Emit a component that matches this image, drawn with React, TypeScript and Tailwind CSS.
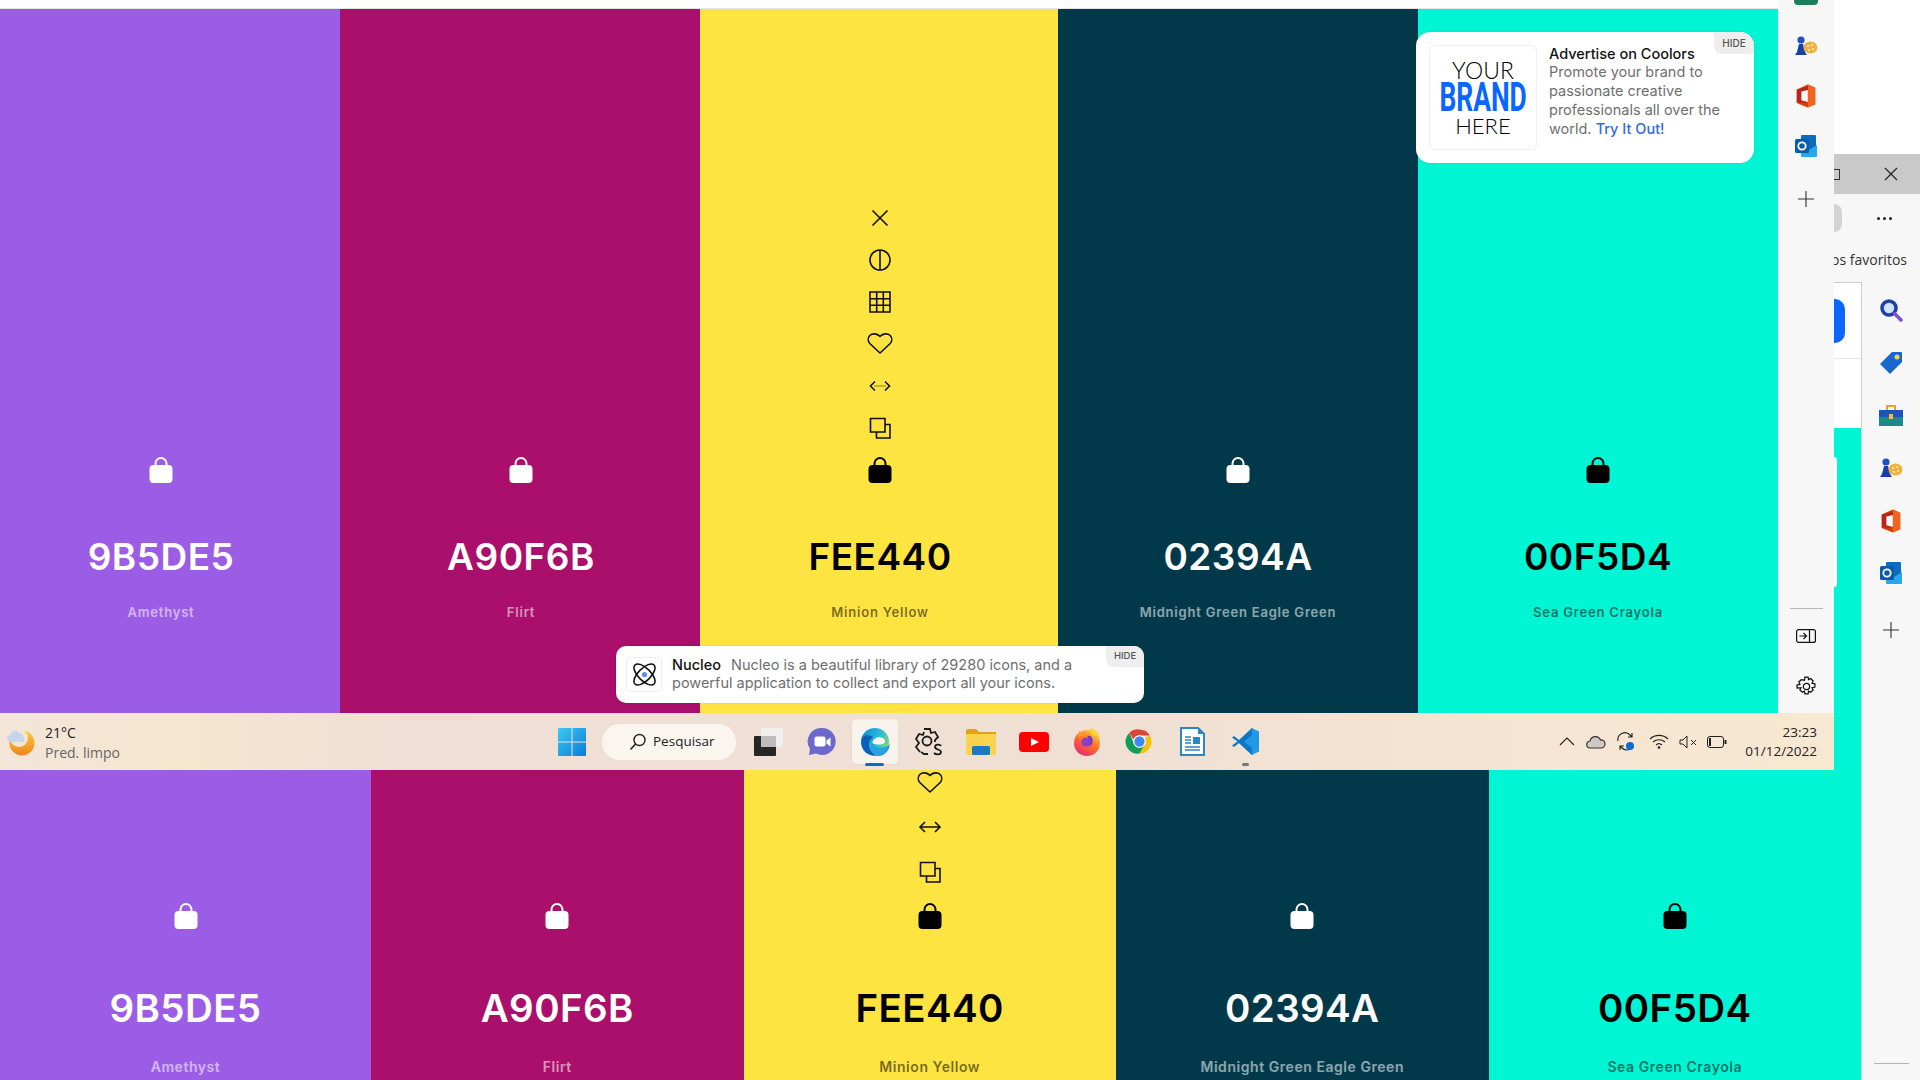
import { ReactNode } from "react";

const FONT = "font-['Inter','Liberation_Sans',sans-serif]";
const WIN = "font-['Open_Sans','Noto_Sans',sans-serif]";

function LockIcon({ color }: { color: string }) {
    return (
        <svg width="24" height="28" viewBox="0 0 24 28">
            <path d="M6.5 12V7.5a5.5 5.5 0 0 1 11 0V12" fill="none" stroke={color} strokeWidth="2" />
            <rect x="0.5" y="9" width="23" height="18" rx="4" fill={color} />
        </svg>
    );
}

function ToolIcon({ kind }: { kind: string }) {
    const p = { fill: "none", stroke: "#111", strokeWidth: 1.6 };
    return (
        <svg width="26" height="26" viewBox="0 0 26 26">
            {kind === "x" && <path d="M5.5 5.5l15 15M20.5 5.5l-15 15" {...p} />}
            {kind === "half" && (
                <>
                    <circle cx="13" cy="13" r="10" {...p} />
                    <path d="M13 3v20" {...p} />
                </>
            )}
            {kind === "grid" && (
                <path d="M3 3h20v20H3zM3 9.7h20M3 16.3h20M9.7 3v20M16.3 3v20" {...p} />
            )}
            {kind === "heart" && (
                <path d="M13 22L2.800 12.500a6 6 0 0 1 0-8c2.800-2.600 7.200-2 10.200 .8 3-2.800 7.400-3.400 10.200-.8a6 6 0 0 1 0 8z" {...p} />
            )}
            {kind === "arrows" && <path d="M8 8l-5 5 5 5M18 8l5 5-5 5M4 13h18" {...p} />}
            {kind === "arrowsfaint" && (
                <>
                    <path d="M7 13h12" stroke="#b5a23a" strokeWidth="1.600" />
                    <path d="M8 8.500L3.500 13 8 17.500M18 8.500l4.500 4.500-4.500 4.500" {...p} />
                </>
            )}
            {kind === "copy" && <path d="M3.500 3.500h14.500v13.500H3.500zM18 9.500h5v13.500H9.500V17" {...p} />}
        </svg>
    );
}

const SWATCHES = [
    { hex: "9B5DE5", name: "Amethyst", bg: "bg-[#9b5de5]", light: true },
    { hex: "A90F6B", name: "Flirt", bg: "bg-[#a90f6b]", light: true },
    { hex: "FEE440", name: "Minion Yellow", bg: "bg-[#fee440]", light: false, tools: true },
    { hex: "02394A", name: "Midnight Green Eagle Green", bg: "bg-[#02394a]", light: true },
    { hex: "00F5D4", name: "Sea Green Crayola", bg: "bg-[#00f5d4]", light: false },
];

function TopSwatch({ s, className }: { s: (typeof SWATCHES)[number]; className: string }) {
    return (
        <div className={`${className} ${s.bg} flex flex-col items-center justify-end pb-[93px] ${FONT}`}>
            {s.tools &&
                ["x", "half", "grid", "heart", "arrowsfaint", "copy"].map((k) => (
                    <div key={k} className="h-[42px] flex items-center justify-center">
                        <ToolIcon kind={k} />
                    </div>
                ))}
            <div className="h-[42px] flex items-center justify-center">
                <LockIcon color={s.light ? "#fff" : "#000"} />
            </div>
            <div className={`mt-[43px] h-[45px] leading-[45px] text-[37px] font-semibold tracking-[0.5px] ${s.light ? "text-white" : "text-black"}`}>
                {s.hex}
            </div>
            <div className={`mt-[25px] h-4 leading-4 text-[13px] font-semibold tracking-[0.8px] ${s.light ? "text-white/55" : "text-black/55"}`}>
                {s.name}
            </div>
        </div>
    );
}

function BottomSwatch({ s, className }: { s: (typeof SWATCHES)[number]; className: string }) {
    return (
        <div className={`${className} h-full overflow-hidden ${s.bg} flex flex-col items-center justify-end pb-[5px] ${FONT}`}>
            {s.tools &&
                ["heart", "arrows", "copy"].map((k) => (
                    <div key={k} className="h-[44.500px] shrink-0 flex items-center justify-center">
                        <ToolIcon kind={k} />
                    </div>
                ))}
            <div className="h-[44px] shrink-0 flex items-center justify-center">
                <LockIcon color={s.light ? "#fff" : "#000"} />
            </div>
            <div className={`mt-[47px] h-[46px] shrink-0 leading-[46px] text-[38.500px] font-semibold tracking-[0.4px] ${s.light ? "text-white" : "text-black"}`}>
                {s.hex}
            </div>
            <div className={`mt-[28px] h-4 shrink-0 leading-4 text-[14px] font-semibold tracking-[0.55px] ${s.light ? "text-white/55" : "text-black/55"}`}>
                {s.name}
            </div>
        </div>
    );
}

function GamesIcon() {
    return (
        <svg width="24" height="24" viewBox="0 0 24 24">
            <circle cx="7" cy="6" r="3.600" fill="#1f4fc4" />
            <path d="M5 10h4l2 8 2 3H1l2-3z" fill="#1540b0" />
            <ellipse cx="16.500" cy="13.500" rx="7" ry="6" fill="#f0b23c" />
            <circle cx="14" cy="12" r="1.100" fill="#fff2c8" />
            <circle cx="18" cy="11" r="1.100" fill="#fff2c8" />
            <circle cx="19" cy="15" r="1.100" fill="#fff2c8" />
            <circle cx="15" cy="16" r="1.100" fill="#fff2c8" />
        </svg>
    );
}

function OfficeIcon() {
    return (
        <svg width="24" height="24" viewBox="0 0 24 26">
            <path d="M2 6l12-5.500 8 3.500v18l-8 3.500-12-5z" fill="#d83b01" />
            <path d="M14 .5l8 3.500v18l-8 3.500z" fill="#f0641e" />
            <path d="M2 6l12-3v17L2 20z" fill="#b7261b" />
            <path d="M7 8l7-1.500v13L7 17.500z" fill="#f7f7f7" />
        </svg>
    );
}

function OutlookIcon() {
    return (
        <svg width="24" height="24" viewBox="0 0 24 24">
            <rect x="7" y="1" width="15" height="19" rx="1" fill="#0f6cbd" />
            <path d="M7 11l8 5 8-5v11a1 1 0 0 1-1 1H8a1 1 0 0 1-1-1z" fill="#28a8ea" />
            <rect x="1" y="5" width="14" height="14" rx="1.500" fill="#0a5ca8" />
            <circle cx="8" cy="12" r="3.700" fill="none" stroke="#fff" strokeWidth="1.800" />
        </svg>
    );
}

function PlusIcon() {
    return (
        <svg width="16" height="16" viewBox="0 0 16 16">
            <path d="M8 0v16M0 8h16" stroke="#333" strokeWidth="1.100" />
        </svg>
    );
}

function TaskSlot({ children }: { children: ReactNode }) {
    return <div className="relative w-[53px] h-[46px] flex items-center justify-center">{children}</div>;
}

function Taskbar() {
    return (
        <div className={`h-[57px] flex items-center bg-[linear-gradient(90deg,#f3e5d8_0%,#f5e6cf_10%,#efdfd5_22%,#f0e0d4_60%,#f5e5d2_85%,#f7e8d2_100%)] ${WIN}`}>
            {/* weather */}
            <div className="w-[558px] flex items-center pl-[7px] gap-[10px]">
                <svg width="28" height="30" viewBox="0 0 28 30">
                    <defs>
                        <linearGradient id="moon" x1="0" y1="0" x2="0" y2="1">
                            <stop offset="0" stopColor="#f8cb3e" />
                            <stop offset="1" stopColor="#f0851a" />
                        </linearGradient>
                    </defs>
                    <circle cx="15" cy="16" r="12.500" fill="url(#moon)" />
                    <circle cx="12" cy="11" r="9" fill="#f4e6d4" />
                    <path d="M4 15a3.500 3.500 0 0 1-.5-7 4.500 4.500 0 0 1 8.500-2 3.500 3.500 0 0 1 4 3.500c1.800.5 2 5.500-.5 5.500z" fill="#c5d6ec" />
                </svg>
                <div className="text-[14px] leading-[19.500px] mt-[2px]">
                    <div className="text-[#222]">21°C</div>
                    <div className="text-[#666]">Pred. limpo</div>
                </div>
            </div>
            {/* start */}
            <svg width="28" height="28" viewBox="0 0 28 28">
                <defs>
                    <linearGradient id="win" x1="0" y1="0" x2="1" y2="1">
                        <stop offset="0" stopColor="#3ccbf4" />
                        <stop offset="1" stopColor="#0a7bd8" />
                    </linearGradient>
                </defs>
                <path d="M0 1a1 1 0 0 1 1-1h12.500v13.500H0zM14.500 0H27a1 1 0 0 1 1 1v12.500H14.500zM0 14.500h13.500V28H1a1 1 0 0 1-1-1zM14.500 14.500H28V27a1 1 0 0 1-1 1H14.500z" fill="url(#win)" />
            </svg>
            {/* search */}
            <div className="ml-4 w-[134px] h-9 rounded-full bg-[#fbf5f0] flex items-center pl-[27px] gap-[6px] text-[13.500px] text-[#222]">
                <svg width="18" height="18" viewBox="0 0 18 18">
                    <circle cx="10.500" cy="7" r="5.500" fill="none" stroke="#222" strokeWidth="1.400" />
                    <path d="M6.500 11L1.500 16.500" stroke="#222" strokeWidth="1.600" />
                </svg>
                Pesquisar
            </div>
            <div className="ml-[6px] flex items-center">
                <TaskSlot>
                    <svg width="30" height="30" viewBox="0 0 30 30">
                        <rect x="7" y="1" width="22" height="19" fill="#f2f0ee" />
                        <rect x="0" y="9" width="22" height="20" rx="1" fill="#262626" />
                        <rect x="7" y="9" width="15" height="11" fill="#bdbdbd" />
                    </svg>
                </TaskSlot>
                <TaskSlot>
                    <svg width="29" height="29" viewBox="0 0 29 29">
                        <path d="M15 1a13.500 13.500 0 1 1-6 25.500L2 28l1-6A13.500 13.500 0 0 1 15 1z" fill="#6f68cc" />
                        <rect x="7.500" y="9.500" width="11" height="10" rx="2" fill="#fff" />
                        <path d="M19.500 13.500l4-3v9l-4-3z" fill="#fff" />
                    </svg>
                </TaskSlot>
                <TaskSlot>
                    <div className="w-[46px] h-[45px] rounded bg-[#f9f3ee] shadow-[0_0_1px_rgba(0,0,0,0.2)] flex items-center justify-center">
                        <svg width="30" height="30" viewBox="0 0 30 30">
                            <defs>
                                <linearGradient id="edge" x1="0" y1="0.300" x2="1" y2="0.700">
                                    <stop offset="0" stopColor="#0c8ed6" />
                                    <stop offset="0.550" stopColor="#2cbcd8" />
                                    <stop offset="1" stopColor="#7fdc6a" />
                                </linearGradient>
                            </defs>
                            <circle cx="15" cy="15" r="14" fill="url(#edge)" />
                            <path d="M29.500 17c-1 2.500-5 3.500-8.500 3.500-5 0-8.500-2-8.500-5 -3 3-3 10 4 13 3 1.500 10 0 13.500-5z" fill="#2aa0e0" />
                            <path d="M1.500 13C3 7 9 7.500 13 10c-3 2-4.500 5-4 9 .5 4 3 7.500 7 9.500C7 29 0 22 1.500 13z" fill="#0c5fb4" />
                            <path d="M12.500 15.500c.5-4 5-6 9-5 2.500.6 4 2.500 3.500 4.500-.5 2-3.500 2.500-6 2.500-3 0-6.500-.5-6.500-2z" fill="#f7f8f2" />
                            <path d="M30 18c-1 6-6 11-11 11.500h11z" fill="#f9f3ee" />
                        </svg>
                    </div>
                    <div className="absolute bottom-[-1px] left-[17px] w-[19px] h-[3px] rounded bg-[#0a6cc4]" />
                </TaskSlot>
                <TaskSlot>
                    <svg width="28" height="30" viewBox="0 0 28 30" fill="none" stroke="#1c1c1c" strokeWidth="1.800">
                        <circle cx="13" cy="14" r="4.500" />
                        <path d="M10 2h6l1 4 4-1 3 5-3 3v2M6 25l-4-5 3-4-3-4 3-5 4 1 1-3M7 25l3 2h4" />
                        <path d="M27 19c-1-2-6-2-6 1s6 2 6 5-5 3-7 1" />
                    </svg>
                </TaskSlot>
                <TaskSlot>
                    <svg width="30" height="26" viewBox="0 0 30 26">
                        <path d="M0 2a2 2 0 0 1 2-2h8l3 3h17v5H0z" fill="#dfa31a" />
                        <rect y="5" width="30" height="21" rx="1" fill="#fbd34f" />
                        <rect x="6" y="17" width="18" height="9" rx="1.500" fill="#1a7ac2" />
                    </svg>
                </TaskSlot>
                <TaskSlot>
                    <svg width="30" height="20" viewBox="0 0 30 20">
                        <rect width="30" height="20" rx="4" fill="#f00" />
                        <path d="M12 6l8 4-8 4z" fill="#fff" />
                    </svg>
                </TaskSlot>
                <TaskSlot>
                    <svg width="28" height="28" viewBox="0 0 28 28">
                        <defs>
                            <linearGradient id="fx" x1="0.800" y1="0" x2="0.200" y2="1">
                                <stop offset="0" stopColor="#ffd43a" />
                                <stop offset="0.500" stopColor="#ff6a2b" />
                                <stop offset="1" stopColor="#e6237a" />
                            </linearGradient>
                        </defs>
                        <circle cx="14" cy="15" r="13" fill="url(#fx)" />
                        <path d="M14 8c5-1 7 4 5 8-2 3-7 3-9 0 3 1 6 0 6-3 0-2-1-4-2-5z" fill="#6d3bc0" />
                        <circle cx="13" cy="14" r="4.500" fill="#8a3fc8" />
                        <path d="M6 3l5 4-6 3z" fill="#ff9a2b" />
                        <path d="M17 0c5 1 9 5 10 10l-8-3z" fill="#ffd43a" />
                    </svg>
                </TaskSlot>
                <TaskSlot>
                    <svg width="29" height="29" viewBox="0 0 48 48">
                        <path d="M24 4a20 20 0 0 1 17.300 10H24a10 10 0 0 0-9.600 7.200L7 9.800A20 20 0 0 1 24 4z" fill="#db4437" />
                        <path d="M41.300 14A20 20 0 0 1 24 44l8.700-15A10 10 0 0 0 32.500 19z" fill="#f4c20d" />
                        <path d="M24 44A20 20 0 0 1 7 9.800L15.700 29A10 10 0 0 0 32.700 29z" fill="#0f9d58" />
                        <circle cx="24" cy="24" r="9.500" fill="#4285f4" stroke="#fff" strokeWidth="2" />
                    </svg>
                </TaskSlot>
                <TaskSlot>
                    <svg width="25" height="29" viewBox="0 0 25 29">
                        <path d="M1 1h17l6 6v21H1z" fill="#fff" stroke="#2a86c4" strokeWidth="2" />
                        <path d="M18 0l7 7h-7z" fill="#2a86c4" />
                        <path d="M5 10h6M5 13h6M5 16h6M5 20h15M5 23h15" stroke="#2a86c4" strokeWidth="1.400" />
                        <rect x="13" y="10" width="7" height="7" fill="#2a86c4" />
                    </svg>
                </TaskSlot>
                <TaskSlot>
                    <svg width="29" height="29" viewBox="0 0 29 29">
                        <path d="M21 1l7 3.500v20L21 28 8 16z" fill="#2299e6" />
                        <path d="M21 1L8 13 3 9 1 10.500 6.500 14.500 1 18.500 3 20l5-4 13 12V21l-8-6.500L21 8z" fill="#0a78c6" />
                    </svg>
                    <div className="absolute bottom-[-1px] left-[23px] w-[7px] h-[3px] rounded bg-[#777]" />
                </TaskSlot>
            </div>
            {/* tray */}
            <div className="ml-auto pr-[17px] flex items-center">
                <svg width="16" height="9" viewBox="0 0 16 9">
                    <path d="M1 8l7-7 7 7" fill="none" stroke="#222" strokeWidth="1.100" />
                </svg>
                <svg className="ml-[11px]" width="20" height="14" viewBox="0 0 20 14">
                    <path d="M4.500 13a3.500 3.500 0 0 1-.5-7 5.500 5.500 0 0 1 10.500-1 4 4 0 0 1 1 8z" fill="#cfc8c2" stroke="#333" strokeWidth="1.200" />
                </svg>
                <svg className="ml-[9px]" width="22" height="20" viewBox="0 0 22 20">
                    <path d="M3 9a7 7 0 0 1 12-6l2 2M17 1v4h-4M15 17c-3 1.500-6 1-8-1l-2-2M5 18v-4h4" fill="none" stroke="#222" strokeWidth="1.100" />
                    <circle cx="15" cy="14" r="4" fill="#0a6cd0" />
                </svg>
                <svg className="ml-[12px]" width="20" height="15" viewBox="0 0 20 15">
                    <path d="M1 5a13 13 0 0 1 18 0M4 8a9 9 0 0 1 12 0M7 11a4.500 4.500 0 0 1 6 0" fill="none" stroke="#222" strokeWidth="1.100" />
                    <circle cx="10" cy="13.500" r="1.300" fill="#222" />
                </svg>
                <svg className="ml-[10px]" width="18" height="14" viewBox="0 0 18 14">
                    <path d="M1 5h3l4-4v12L4 9H1zM12 5l5 5M17 5l-5 5" fill="none" stroke="#222" strokeWidth="1" />
                </svg>
                <svg className="ml-[10px]" width="20" height="12" viewBox="0 0 20 12">
                    <rect x=".5" y=".5" width="16" height="11" rx="2.500" fill="none" stroke="#222" />
                    <rect x="2" y="2" width="2" height="8" fill="#222" />
                    <rect x="17.500" y="4" width="2" height="4" fill="#222" />
                </svg>
                <div className="ml-[18px] mt-[6px] h-[33px] overflow-hidden text-right text-[13.500px] leading-[19px] text-[#222]">
                    <div className="-mt-[5px]">23:23</div>
                    <div>01/12/2022</div>
                </div>
            </div>
        </div>
    );
}

function AdCard() {
    return (
        <div className={`absolute left-[1416px] top-[32px] w-[338px] h-[131px] rounded-[14px] bg-white flex items-center pl-[13px] gap-3 shadow-[0_0_2px_rgba(0,0,0,0.15)] ${FONT}`}>
            <div className="w-[108px] h-[105px] shrink-0 rounded-md border border-[#eeeeee] flex flex-col items-center justify-center text-black font-['Lato',sans-serif]">
                <div className="text-[23px] leading-[26px] font-light">YOUR</div>
                <div className="text-[40px] leading-[30px] font-bold text-[#0a66ff] scale-x-[0.66] font-['Roboto',sans-serif]">BRAND</div>
                <div className="text-[22px] leading-[26px] font-light">HERE</div>
            </div>
            <div className="text-[14.500px] leading-[19px] text-[#6f6f6f] w-[210px] -mt-[13px]">
                <div className="font-medium text-[#111] h-[18px]">Advertise on Coolors</div>
                Promote your brand to passionate creative professionals all over the world.{" "}
                <span className="font-medium text-[#2f6be0]">Try It Out!</span>
            </div>
            <div className="absolute right-0 top-0 w-10 h-[22px] rounded-tr-[14px] rounded-bl-lg bg-[#eeeeee] flex items-center justify-center text-[10px] font-medium text-[#555]">
                HIDE
            </div>
        </div>
    );
}

function NucleoCard() {
    return (
        <div className={`absolute left-[616px] top-[646px] w-[528px] h-[57px] rounded-[10px] bg-white flex items-center pl-[10px] gap-[10px] shadow-[0_0_2px_rgba(0,0,0,0.15)] ${FONT}`}>
            <div className="w-[36px] h-[35px] shrink-0 rounded border border-[#eeeeee] flex items-center justify-center">
                <svg width="27" height="27" viewBox="0 0 26 26" fill="none" stroke="#111" strokeWidth="1.500">
                    <ellipse cx="13" cy="13" rx="13" ry="6" transform="rotate(45 13 13)" />
                    <ellipse cx="13" cy="13" rx="13" ry="6" transform="rotate(-45 13 13)" />
                    <circle cx="13" cy="13" r="2.500" fill="#5b8def" stroke="none" />
                </svg>
            </div>
            <div className="text-[14.500px] leading-[18px] text-[#6f6f6f] w-[410px] -mt-[2px]">
                <span className="font-medium text-[#111] mr-[10px]">Nucleo</span>
                Nucleo is a beautiful library of 29280 icons, and a powerful application to collect and export all your icons.
            </div>
            <div className="absolute right-0 top-0 w-[38px] h-[21px] rounded-tr-[10px] rounded-bl-lg bg-[#eeeeee] flex items-center justify-center text-[9.500px] font-medium text-[#555]">
                HIDE
            </div>
        </div>
    );
}

export default function App() {
    return (
        <div className="relative w-[1920px] h-[1080px] overflow-hidden bg-white">
            {/* foreground window */}
            <div className="flex h-[770px]">
                <div className="w-[1834px] flex flex-col">
                    <div className="h-[9px] bg-white border-b border-black/10" />
                    <div className="flex-1 flex">
                        <div className="w-[340px] pr-[18px] bg-[#9b5de5] flex">
                            <TopSwatch s={SWATCHES[0]} className="flex-1" />
                        </div>
                        <TopSwatch s={SWATCHES[1]} className="w-[360px] pl-[2px]" />
                        <TopSwatch s={SWATCHES[2]} className="w-[358px] pl-[2px]" />
                        <TopSwatch s={SWATCHES[3]} className="w-[360px]" />
                        <TopSwatch s={SWATCHES[4]} className="w-[360px]" />
                        {/* edge sidebar */}
                        <div className="w-[56px] -mt-[9px] bg-[#f7f7f7] flex flex-col items-center relative z-10">
                            <div className="h-[5px] w-6 rounded-b-sm bg-[#1a7f5a]" />
                            <div className="mt-[29px] flex flex-col items-center gap-[26px]">
                                <GamesIcon />
                                <OfficeIcon />
                                <OutlookIcon />
                            </div>
                            <div className="mt-[33px]"><PlusIcon /></div>
                            <div className="mt-[401px] w-[33px] h-px bg-[#bbbbbb]" />
                            <svg className="mt-[20px]" width="20" height="14" viewBox="0 0 20 14" fill="none" stroke="#111" strokeWidth="1.200">
                                <rect x=".6" y=".6" width="18.800" height="12.800" rx="2" />
                                <path d="M13.500 1v12M3.500 7h6.500M7.500 4l3 3-3 3" />
                            </svg>
                            <svg className="mt-[33px]" width="21" height="21" viewBox="0 0 20 20" fill="none" stroke="#111" strokeWidth="1.200">
                                <circle cx="10" cy="10" r="3" />
                                <path d="M8.500 1h3l.5 2.500 2-1 2.300 2.200-1 2.300 2.700.5v3l-2.700.6 1 2.200-2.300 2.200-2-1-.5 2.500h-3l-.5-2.500-2 1-2.300-2.200 1-2.200L1 11.500v-3L3.700 8l-1-2.300L5 3.500l3 .5z" />
                            </svg>
                        </div>
                    </div>
                    <Taskbar />
                </div>

                {/* background window */}
                <div className="w-[86px] flex flex-col bg-[#f7f7f7]">
                    <div className="h-[154px] bg-white" />
                    <div className="h-10 bg-[#c9c9c9] flex items-center justify-between pr-[22px]">
                        <div className="w-[6px] h-[11px] border border-l-0 border-[#333]" />
                        <svg width="14" height="14" viewBox="0 0 14 14">
                            <path d="M1 1l12 12M13 1L1 13" stroke="#222" strokeWidth="1.200" />
                        </svg>
                    </div>
                    <div className="h-[88px] flex flex-col items-end pr-[13px] relative overflow-hidden">
                        <div className="absolute left-0 top-[10px] w-2 h-7 rounded-r-full bg-[#d4d4d4]" />
                        <div className="mt-[23px] mr-[15px] flex gap-[3px]">
                            <div className="w-[3px] h-[3px] rounded-full bg-[#222]" />
                            <div className="w-[3px] h-[3px] rounded-full bg-[#222]" />
                            <div className="w-[3px] h-[3px] rounded-full bg-[#222]" />
                        </div>
                        <div className={`mt-[31px] text-[14px] leading-[18px] text-[#333] w-[73px] whitespace-nowrap flex justify-end ${WIN}`}>
                            os favoritos
                        </div>
                    </div>
                    <div className="flex-1 flex">
                        <div className="w-7 flex flex-col">
                            <div className="h-[146px] bg-white border-t border-r border-[#cccccc] pt-[16px]">
                                <div className="w-[11px] h-[44px] rounded-r-[10px] bg-[#0a66ff]" />
                                <div className="mt-[15px] h-px bg-[#e4e4e4]" />
                            </div>
                            <div className="flex-1 bg-[#00f5d4] pt-[29px] border-r border-[#bfe9df]">
                                <div className="w-[3px] h-[130px] rounded-r bg-white" />
                            </div>
                        </div>
                        <div className="flex-1 flex flex-col items-center pt-[16px] gap-[28.700px]">
                            <svg width="24" height="24" viewBox="0 0 24 24">
                                <circle cx="10" cy="10" r="7" fill="#cfe3fb" stroke="#1c3fa8" strokeWidth="3.500" />
                                <path d="M15.500 15.500L22 22" stroke="#7a4fd0" strokeWidth="3.500" strokeLinecap="round" />
                            </svg>
                            <svg width="24" height="24" viewBox="0 0 24 24">
                                <path d="M13 1h9a1 1 0 0 1 1 1v9L11 23 1 13z" fill="#1668d0" />
                                <circle cx="18" cy="6" r="2.500" fill="#f5d060" />
                            </svg>
                            <svg width="24" height="24" viewBox="0 0 24 24">
                                <path d="M8 7V3h8v4" fill="none" stroke="#e0a92e" strokeWidth="2" />
                                <rect x="0" y="7" width="24" height="7" fill="#1a56b4" />
                                <rect x="0" y="14" width="24" height="9" fill="#1a8a8a" />
                                <rect x="10" y="11" width="4" height="5" fill="#f0c040" />
                            </svg>
                            <GamesIcon />
                            <OfficeIcon />
                            <OutlookIcon />
                            <div className="mt-[8px]"><PlusIcon /></div>
                        </div>
                    </div>
                </div>
            </div>

            {/* palette behind */}
            <div className="flex h-[310px]">
                <div className="w-[1862px] flex h-full border-r border-[#bfe9df]">
                    {SWATCHES.map((s, i) => (
                        <BottomSwatch key={s.hex} s={s} className={i === 0 ? "w-[371px]" : "flex-1"} />
                    ))}
                </div>
                <div className="flex-1 bg-[#f7f7f7] flex flex-col justify-end items-center pb-[16px]">
                    <div className="w-[35px] h-px bg-[#b5b5b5]" />
                </div>
            </div>

            <AdCard />
            <NucleoCard />
        </div>
    );
}
